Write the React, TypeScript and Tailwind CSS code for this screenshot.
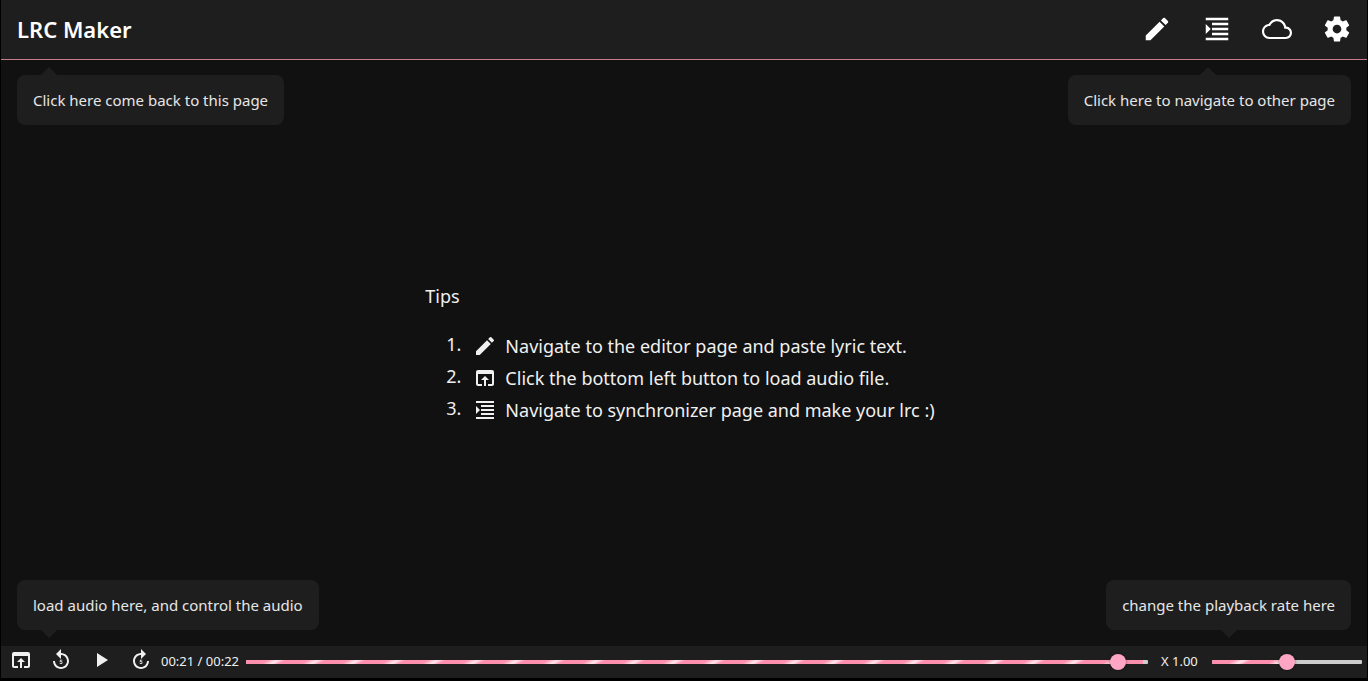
import type { ReactNode } from "react";

const PATHS = {
  edit: "M3 17.25V21h3.75L17.81 9.94l-3.75-3.75L3 17.25zM20.71 7.04a.996.996 0 0 0 0-1.41l-2.34-2.34a.996.996 0 0 0-1.41 0l-1.83 1.83 3.75 3.75 1.83-1.83z",
  sync: "M3 21h18v-2H3v2zM3 8v8l4-4-4-4zm8 9h10v-2H11v2zM3 3v2h18V3H3zm8 6h10V7H11v2zm0 4h10v-2H11v2z",
  syncWide: "M3 21h18v-2H3v2zM3 8v8l4-4-4-4zm5 9h13v-2H8v2zM3 3v2h18V3H3zm5 6h13V7H8v2zm0 4h13v-2H8v2z",
  cloud:
    "M19.35 10.04C18.67 6.59 15.64 4 12 4 9.11 4 6.6 5.64 5.35 8.04 2.34 8.36 0 10.91 0 14c0 3.31 2.69 6 6 6h13c2.76 0 5-2.24 5-5 0-2.64-2.05-4.78-4.65-4.96zM19 18.3H6c-2.4 0-4.3-1.9-4.3-4.3s1.9-4.3 4.3-4.3h.5C7.2 7.4 9.4 5.7 12 5.7c3.2 0 5.8 2.6 5.8 5.8v.2H19c1.8 0 3.3 1.5 3.3 3.3s-1.5 3.3-3.3 3.3z",
  settings:
    "M19.43 12.98c.04-.32.07-.64.07-.98s-.03-.66-.07-.98l2.11-1.65c.19-.15.24-.42.12-.64l-2-3.46c-.12-.22-.39-.3-.61-.22l-2.49 1c-.52-.4-1.08-.73-1.69-.98l-.38-2.65A.488.488 0 0 0 14 2h-4c-.25 0-.46.18-.49.42l-.38 2.65c-.61.25-1.17.59-1.69.98l-2.49-1c-.23-.09-.49 0-.61.22l-2 3.46c-.13.22-.07.49.12.64l2.11 1.65c-.04.32-.07.65-.07.98s.03.66.07.98l-2.11 1.65c-.19.15-.24.42-.12.64l2 3.46c.12.22.39.3.61.22l2.49-1c.52.4 1.08.73 1.69.98l.38 2.65c.03.24.24.42.49.42h4c.25 0 .46-.18.49-.42l.38-2.65c.61-.25 1.17-.59 1.69-.98l2.49 1c.23.09.49 0 .61-.22l2-3.46c.12-.22.07-.49-.12-.64l-2.11-1.65zM12 15.5c-1.93 0-3.5-1.57-3.5-3.5s1.57-3.5 3.5-3.5 3.5 1.57 3.5 3.5-1.57 3.5-3.5 3.5z",
  open: "M19 4H5a2 2 0 0 0-2 2v12a2 2 0 0 0 2 2h4v-2H5V8h14v10h-4v2h4c1.1 0 2-.9 2-2V6a2 2 0 0 0-2-2zm-7 6-4 4h3v6h2v-6h3l-4-4z",
  play: "M8 5v14l11-7z",
  replayRing: "M12 5V1L7 6l5 5V7c3.31 0 6 2.69 6 6s-2.69 6-6 6-6-2.69-6-6H4c0 4.42 3.58 8 8 8s8-3.58 8-8-3.58-8-8-8z",
  forwardRing: "M4 13c0 4.42 3.58 8 8 8s8-3.58 8-8h-2c0 3.31-2.69 6-6 6s-6-2.69-6-6 2.69-6 6-6v4l5-5-5-5v4c-4.42 0-8 3.58-8 8z",
  five: "M10.69 13.9l.25-2.17h2.39v.71h-1.7l-.11.92c.03-.02.07-.03.11-.05s.09-.04.15-.05.12-.03.18-.04.13-.02.2-.02c.21 0 .39.03.55.1s.3.16.41.28.2.27.25.45.09.38.09.6c0 .19-.03.37-.09.54s-.15.32-.27.45-.27.24-.45.31-.39.12-.64.12c-.18 0-.36-.03-.53-.08s-.32-.14-.46-.24-.24-.24-.32-.39-.13-.33-.13-.53h.84c.02.18.08.32.19.41s.25.15.42.15c.11 0 .2-.02.27-.06s.14-.1.18-.17.08-.15.11-.25.03-.2.03-.31-.01-.21-.04-.31-.07-.17-.13-.24-.13-.12-.21-.15-.19-.05-.3-.05c-.08 0-.15.01-.2.02s-.11.03-.15.05-.08.05-.12.07-.07.06-.1.09l-.67-.16z",
};

function Icon({ d, className }: { d: string; className: string }) {
  return (
    <svg viewBox="0 0 24 24" fill="currentColor" fillRule="evenodd" aria-hidden="true" className={className}>
      <path d={d} />
    </svg>
  );
}

function Hint({ arrow, side, children }: { arrow: string; side: "top" | "bottom"; children: ReactNode }) {
  return (
    <div className="relative rounded-lg bg-[#1e1e1e] px-4 py-3 text-[15px] leading-[26px] text-[#e6e6e6]">
      {children}
      <svg
        viewBox="0 0 16 8"
        aria-hidden="true"
        className={`absolute h-2 w-4 text-[#1e1e1e] ${side === "top" ? "bottom-full" : "top-full"} ${arrow}`}
      >
        <path d={side === "top" ? "M0 8L8 0L16 8Z" : "M0 0L8 8L16 0Z"} fill="currentColor" />
      </svg>
    </div>
  );
}

const STRIPES =
  "bg-[repeating-linear-gradient(150deg,#fc8fae_0px,#fc8fae_11px,#ffe8ee_16px,#fc8fae_20px)]";

function Slider({
  label,
  value,
  buffered,
  className,
}: {
  label: string;
  value: number;
  buffered: number;
  className: string;
}) {
  return (
    <div className={`relative flex h-4 items-center ${className}`}>
      <div className="h-1 w-full overflow-hidden rounded-[1px] bg-[#cccccc]">
        <div className={`h-full ${STRIPES}`} style={{ width: `${buffered}%` }} />
      </div>
      <input
        type="range"
        aria-label={label}
        min={0}
        max={100}
        step="any"
        defaultValue={value}
        className="absolute inset-0 m-0 h-4 w-full cursor-pointer appearance-none bg-transparent [&::-webkit-slider-thumb]:size-4 [&::-webkit-slider-thumb]:appearance-none [&::-webkit-slider-thumb]:rounded-full [&::-webkit-slider-thumb]:bg-[#ffa6c5] [&::-webkit-slider-thumb]:shadow-[0_0_3px_rgba(0,0,0,0.5)]"
      />
    </div>
  );
}

const NAV = [
  { label: "Editor", d: PATHS.edit },
  { label: "Synchronizer", d: PATHS.syncWide },
  { label: "Cloud storage", d: PATHS.cloud },
  { label: "Preferences", d: PATHS.settings },
];

const TIPS = [
  { d: PATHS.edit, text: "Navigate to the editor page and paste lyric text." },
  { d: PATHS.open, text: "Click the bottom left button to load audio file." },
  { d: PATHS.syncWide, text: "Navigate to synchronizer page and make your lrc :)" },
];

const CONTROLS = [
  { label: "Load audio", d: PATHS.open },
  { label: "Back 5 seconds", d: PATHS.replayRing + PATHS.five },
  { label: "Play", d: PATHS.play },
  { label: "Forward 5 seconds", d: PATHS.forwardRing + PATHS.five },
];

export default function App() {
  return (
    <div className="flex min-h-screen flex-col bg-black px-px pb-[3px] font-['Noto_Sans',sans-serif] text-[#f0f0f0]">
      <header className="flex h-[60px] items-center justify-between border-b border-[#c77a8c] bg-[#1e1e1e] pb-0.5 pl-4 text-white">
        <a href="#home" className="text-[22px] leading-8 font-semibold">
          LRC Maker
        </a>
        <nav className="flex">
          {NAV.map((item) => (
            <a key={item.label} href="#page" aria-label={item.label} className="flex h-14 w-[60px] items-center justify-center">
              <Icon d={item.d} className="size-[30px]" />
            </a>
          ))}
        </nav>
      </header>

      <main className="flex flex-1 flex-col justify-between bg-[#111111] px-4 pt-[15px] pb-4">
        <div className="flex justify-between">
          <Hint side="top" arrow="left-6">Click here come back to this page</Hint>
          <Hint side="top" arrow="right-[135px]">Click here to navigate to other page</Hint>
        </div>

        <section className="mx-auto pr-2 text-lg leading-7">
          <p className="mb-[22px]">Tips</p>
          <ol className="flex flex-col gap-1">
            {TIPS.map((tip, index) => (
              <li key={tip.text} className="flex items-start">
                <span className="w-9 text-right leading-6">{index + 1}.</span>
                <Icon d={tip.d} className="mt-0.5 mr-2 ml-3 size-6" />
                <span>{tip.text}</span>
              </li>
            ))}
          </ol>
        </section>

        <div className="flex justify-between">
          <Hint side="bottom" arrow="left-6">load audio here, and control the audio</Hint>
          <Hint side="bottom" arrow="right-[114px]">change the playback rate here</Hint>
        </div>
      </main>

      <footer className="flex h-8 items-center bg-[#1e1e1e] pr-[5px] text-[13px]">
        {CONTROLS.map((item) => (
          <button key={item.label} type="button" aria-label={item.label} className="flex h-7 w-10 items-center justify-center pb-1">
            <Icon d={item.d} className="size-6" />
          </button>
        ))}
        <time className="w-[85px] whitespace-nowrap">00:21 / 00:22</time>
        <Slider label="Playback position" value={97.5} buffered={99.5} className="flex-1" />
        <span className="w-16 pl-[13px] whitespace-nowrap">X 1.00</span>
        <Slider label="Playback rate" value={50} buffered={50} className="w-[150px]" />
      </footer>
    </div>
  );
}
